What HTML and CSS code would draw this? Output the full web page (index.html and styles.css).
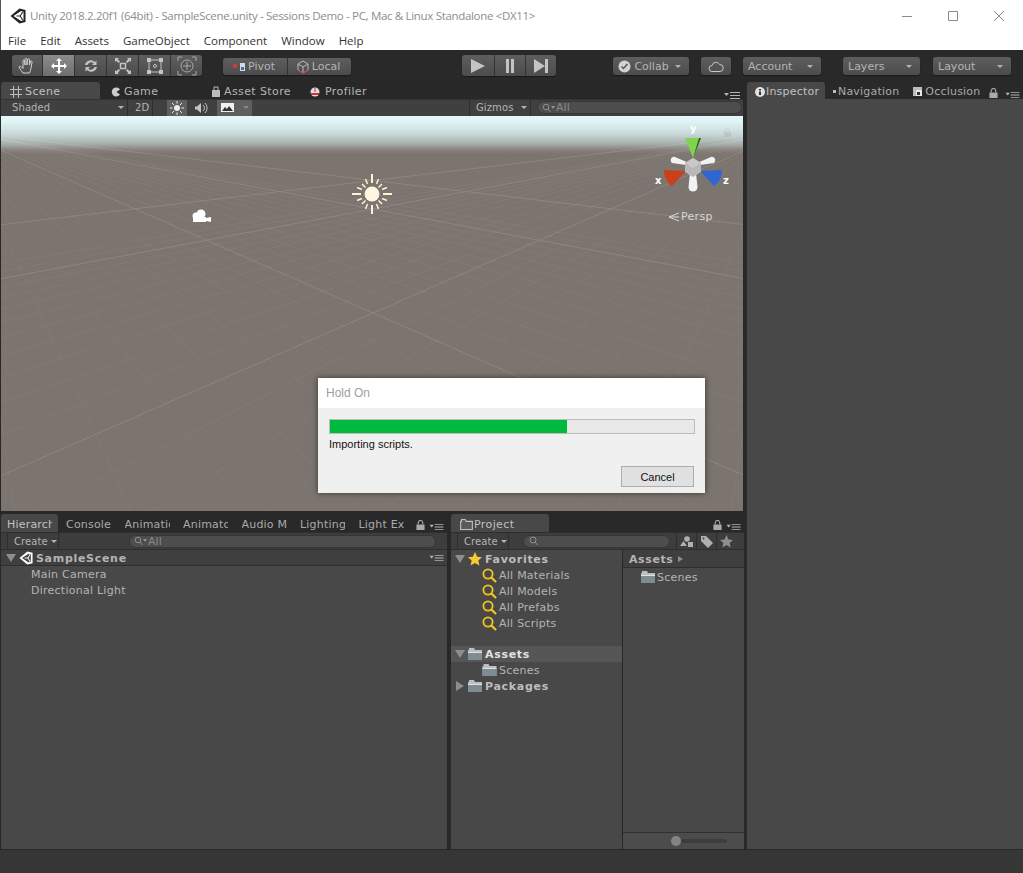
FILE: index.html
```html
<!DOCTYPE html>
<html lang="en">
<head>
  <meta charset="UTF-8">
  <title>Unity 2018.2.20f1</title>
  <link rel="stylesheet" href="styles.css">
</head>
<body>
  <svg class="defs" width="0" height="0">
    <symbol id="logo" viewBox="0 0 16 16"><path d="M.5 8L9.500.5l6 1.500v12l-6 1.500zM3.500 8l7.500 5 2.500-.8V3.800L11 3z" fill-rule="evenodd"/><path d="M6.500 7.400h3.400l2.400-3.900.9.600L10.800 8l2.400 3.900-.9.600-2.400-3.900H6.500z"/></symbol>
    <symbol id="folder" viewBox="0 0 14 12"><path d="M0 2h1V0h5l1 2h7v10H0z" fill="#b9c0c2"/><path d="M0 4h14v8H0z" fill="#7f8d92"/><path d="M0 4h14v1H0z" fill="#dfe3e4"/></symbol>
    <symbol id="mag" viewBox="0 0 15 15"><circle cx="6" cy="6" r="4.600" fill="none" stroke="#f2c81f" stroke-width="1.800"/><path d="M9.500 9.500l4.500 4.500" stroke="#f2c81f" stroke-width="2.200"/></symbol>
    <symbol id="lock" viewBox="0 0 9 11"><path d="M0 5h9v6H0z" fill="#aaa"/><path d="M2 5V3a2.500 2.500 0 015 0v2" fill="none" stroke="#aaa" stroke-width="1.200"/></symbol>
    <symbol id="menu" viewBox="0 0 16 8"><path d="M0 2h5L2.500 5zM6 1h10v1H6zM6 4h10v1H6zM6 7h10v1H6z" fill="#b5b5b5"/></symbol>
    <symbol id="srch" viewBox="0 0 14 10"><circle cx="4" cy="4" r="2.800" fill="none" stroke="#909090"/><path d="M6 6l2.500 3" stroke="#909090"/><path d="M9 3h4l-2 3z" fill="#909090"/></symbol>
  </svg>

  <div class="window">
    <header class="titlebar">
      <svg class="title-logo"><use href="#logo"/></svg>
      <span class="title-text">Unity 2018.2.20f1 (64bit) - SampleScene.unity - Sessions Demo - PC, Mac &amp; Linux Standalone &lt;DX11&gt;</span>
      <div class="win-btns">
        <svg width="12" height="12" viewBox="0 0 12 12"><path d="M1 6.500h10" stroke="#8a8a8a"/></svg>
        <svg width="12" height="12" viewBox="0 0 12 12"><path d="M1.500 1.500h9v9h-9z" fill="none" stroke="#8a8a8a"/></svg>
        <svg width="12" height="12" viewBox="0 0 12 12"><path d="M1 1l10 10M11 1L1 11" stroke="#8a8a8a"/></svg>
      </div>
    </header>

    <nav class="menubar">
      <span>File</span><span>Edit</span><span>Assets</span><span>GameObject</span><span>Component</span><span>Window</span><span>Help</span>
    </nav>

    <div class="toolbar">
      <div class="btn-group tools">
        <button class="tool"><svg width="18" height="18" viewBox="0 0 18 18"><path d="M5 16c-2-3-4-5-4-6s1.500-1 2.500 0L5 11.500V4c0-1.500 1.500-1.500 1.500 0l.500 4V2.500c0-1.500 2-1.500 2 0V8l.500-5c0-1.500 2-1.500 2 0L11.500 8l1-3.500c.500-1 1.800-.700 1.600.500L13 11c0 2-1 3-1.500 5z" fill="none" stroke="#d0d0d0"/></svg></button>
        <button class="tool active"><svg width="18" height="18" viewBox="0 0 18 18"><path d="M9 1l3 3h-2v4h4V6l3 3-3 3v-2h-4v4h2l-3 3-3-3h2v-4H4v2L1 9l3-3v2h4V4H6z" fill="#fff"/></svg></button>
        <button class="tool"><svg width="18" height="18" viewBox="0 0 18 18"><path d="M3 8a6 6 0 0110-3l1.500-1.500V8H10l1.700-1.700A4 4 0 005.400 8zM15 10a6 6 0 01-10 3l-1.500 1.500V10H8l-1.700 1.700a4 4 0 006.300-1.700z" fill="#c4c4c4"/></svg></button>
        <button class="tool"><svg width="18" height="18" viewBox="0 0 18 18"><path d="M6.500 6.500h5v5h-5z" fill="none" stroke="#c4c4c4" stroke-width="1.500"/><path d="M1 5V1h4L3.700 2.300 6 4.600 4.600 6 2.300 3.700zM17 5V1h-4l1.300 1.300L12 4.600 13.400 6l2.300-2.300zM1 13v4h4l-1.300-1.300L6 13.400 4.600 12l-2.300 2.300zM17 13v4h-4l1.300-1.300-2.300-2.300 1.400-1.400 2.300 2.300z" fill="#c4c4c4"/></svg></button>
        <button class="tool"><svg width="18" height="18" viewBox="0 0 18 18"><path d="M3 3h12v12H3z" fill="none" stroke="#c4c4c4"/><path d="M1 1h4v4H1zM13 1h4v4h-4zM1 13h4v4H1zM13 13h4v4h-4z" fill="#c4c4c4"/><circle cx="9" cy="9" r="1.500" fill="none" stroke="#c4c4c4"/></svg></button>
        <button class="tool"><svg width="20" height="20" viewBox="0 0 20 20"><circle cx="10" cy="10" r="6" fill="none" stroke="#a8a8a8"/><path d="M10 6v8M6 10h8" stroke="#a8a8a8"/><path d="M1 5V1h4M15 1h4v4M1 15v4h4M19 15v4h-4" fill="none" stroke="#a8a8a8"/></svg></button>
      </div>

      <div class="btn-group pivot">
        <button class="pivot-btn"><svg width="14" height="10" viewBox="0 0 14 10"><path d="M1 2h4v4H1z" fill="#d03a30"/><path d="M8 1h5v8H8z" fill="#d8d8d8"/><path d="M9 5h3v3H9z" fill="#3a6fc8"/></svg>Pivot</button>
        <button class="pivot-btn"><svg width="14" height="14" viewBox="0 0 14 14"><path d="M7 1l5 3v6l-5 3-5-3V4zM2 4l5 3 5-3M7 7v6" fill="none" stroke="#b8b8b8"/><path d="M2 10l5 3 5-3" fill="none" stroke="#d03a30"/></svg>Local</button>
      </div>

      <div class="btn-group play">
        <button class="play-btn"><svg width="16" height="14" viewBox="0 0 16 14"><path d="M1 0l14 7-14 7z" fill="#c4c4c4"/></svg></button>
        <button class="play-btn"><svg width="12" height="14" viewBox="0 0 12 14"><path d="M2 0h3v14H2zM7 0h3v14H7z" fill="#c4c4c4"/></svg></button>
        <button class="play-btn"><svg width="16" height="14" viewBox="0 0 16 14"><path d="M1 0l11 7-11 7zM12 0h3v14h-3z" fill="#c4c4c4"/></svg></button>
      </div>

      <button class="tb-btn collab"><svg width="13" height="13" viewBox="0 0 13 13"><circle cx="6.500" cy="6.500" r="6" fill="#d2d2d2"/><path d="M3.500 6.500l2 2 4-4.500" fill="none" stroke="#555" stroke-width="1.500"/></svg>Collab<i class="caret"></i></button>
      <button class="tb-btn cloud"><svg width="16" height="11" viewBox="0 0 16 11"><path d="M4 10.500a3 3 0 010-6 4 4 0 017.500-1A3.500 3.500 0 0112 10.500z" fill="none" stroke="#c8c8c8"/></svg></button>
      <button class="tb-btn account">Account<i class="caret"></i></button>
      <button class="tb-btn layers">Layers<i class="caret"></i></button>
      <button class="tb-btn layout">Layout<i class="caret"></i></button>
    </div>

    <main class="workspace">
      <div class="left-col">
        <section class="scene-panel">
          <div class="tabs">
            <span class="tab tab-active scene-tab"><svg width="12" height="12" viewBox="0 0 12 12"><path d="M3.500 0v12M8.500 0v12M0 3.500h12M0 8.500h12" stroke="#bbb"/></svg>Scene</span>
            <span class="tab game-tab"><svg width="10" height="10" viewBox="0 0 10 10"><path d="M9 2.500A4.500 4.500 0 109 7.500L5.500 5z" fill="#ccc"/></svg>Game</span>
            <span class="tab store-tab"><svg width="10" height="11" viewBox="0 0 10 11"><path d="M1 4h8v7H1z" fill="#bbb"/><path d="M3 4V1h4v3" fill="none" stroke="#bbb"/></svg>Asset Store</span>
            <span class="tab prof-tab"><svg width="10" height="11" viewBox="0 0 10 11"><circle cx="5" cy="6" r="4.500" fill="#ddd"/><path d="M5 6V2" stroke="#c33"/><path d="M1 7h8v2H1z" fill="#c33"/></svg>Profiler</span>
            <svg class="tab-menu"><use href="#menu"/></svg>
          </div>
          <div class="scene-tools">
            <span class="st-btn shaded">Shaded<i class="caret"></i></span>
            <span class="st-btn twod">2D</span>
            <span class="st-btn st-on light"><svg width="14" height="14" viewBox="0 0 14 14"><circle cx="7" cy="7" r="3" fill="#eee"/><path d="M7 0v2.500M7 11.500V14M0 7h2.500M11.500 7H14M2 2l2 2M10 10l2 2M12 2l-2 2M4 10l-2 2" stroke="#eee"/></svg></span>
            <span class="st-btn sound"><svg width="16" height="12" viewBox="0 0 16 12"><path d="M1 4.500h2L7 1v10L3 7.500H1z" fill="#c4c4c4"/><path d="M9 3a4 4 0 010 6M11 1a7 7 0 010 10" fill="none" stroke="#c4c4c4"/></svg></span>
            <span class="st-btn st-on fx"><svg width="13" height="9" viewBox="0 0 13 9"><path d="M0 0h13v9H0z" fill="#f0f0f0"/><path d="M1 8l3-4 2 2 2-3 4 5z" fill="#333"/></svg><i class="caret caret-dim"></i></span>
            <span class="st-btn gizmos">Gizmos<i class="caret"></i></span>
            <span class="search scene-search"><svg width="14" height="10"><use href="#srch"/></svg>All</span>
          </div>
          <div class="scene-view">
            <svg class="grid" width="742" height="395" viewBox="0 0 742 395">
              <defs>
                <g id="minor-lines">
                  <path d="M788 15L-44 5475M788 15L-44 1835M788 15L-44 1107M788 15L-44 795M788 15L-44 622M788 15L-44 511M788 15L-44 435M788 15L-44 336M788 15L-44 302M788 15L-44 275M788 15L-44 252M788 15L-44 233M788 15L-44 217M788 15L-44 203M788 15L-44 191M788 15L-44 180M788 15L-44 163M788 15L-44 155"/>
                </g>
                <g id="major-lines">
                  <path d="M788 15L-44 379M788 15L-44 171M788 15L-44 114"/>
                </g>
              </defs>
              <g stroke="#fff" fill="none">
                <g opacity=".04">
                  <use href="#minor-lines"/>
                  <use href="#minor-lines" transform="matrix(-1 0 0 1 744 0)"/>
                </g>
                <g opacity=".12">
                  <use href="#major-lines"/>
                  <use href="#major-lines" transform="matrix(-1 0 0 1 744 0)"/>
                </g>
              </g>
            </svg>

            <svg class="sun" width="42" height="42" viewBox="0 0 42 42">
              <circle cx="21" cy="21" r="7.500" fill="#fff6e2"/>
              <g stroke="#fff1d4" stroke-width="1.500">
                <path d="M21 1v9M21 32v9M1 21h9M32 21h9" stroke-width="2"/>
                <path d="M11 11l3.500 3.500M31 31l-3.500-3.500M31 11l-3.500 3.500M11 31l3.500-3.500"/>
                <path d="M14.500 6l2 5M27.500 6l-2 5M14.500 36l2-5M27.500 36l-2-5M6 14.500l5 2M6 27.500l5-2M36 14.500l-5 2M36 27.500l-5-2"/>
              </g>
            </svg>

            <svg class="camera" width="22" height="16" viewBox="0 0 22 16">
              <circle cx="10" cy="5" r="4.500" fill="#fff"/><circle cx="5" cy="7" r="3.500" fill="#fff"/>
              <path d="M2 8h13v5H2zM15 9l5-1v5l-5-1z" fill="#fff"/>
            </svg>

            <div class="gizmo">
              <svg width="70" height="75" viewBox="0 0 70 75">
                <path d="M25 13h16l-8 20z" fill="#7ed34f"/><path d="M39 13h2l-8 20z" fill="#2f5a20"/>
                <path d="M4 45l22 1-14 15c-5-3-8-9-8-16z" fill="#c8401c"/>
                <path d="M62 45l-22 1 14 15c5-3 8-9 8-16z" fill="#2f66d0"/>
                <path d="M26 40l-14-2c-3-3 0-7 3-6l14 6zM40 40l14-2c3-3 0-7-3-6l-14 6zM30 48l-1.500 14c0 6 9 6 9 0L36 48z" fill="#f2f2f2"/>
                <path d="M33 33l8 5v9l-8 5-8-5v-9z" fill="#b8b8b8"/><path d="M33 33l8 5-8 5-8-5z" fill="#c8c8c8"/>
              </svg>
              <span class="axis axis-y">y</span>
              <span class="axis axis-x">x</span>
              <span class="axis axis-z">z</span>
              <svg class="gizmo-lock"><use href="#lock"/></svg>
              <span class="persp"><svg width="12" height="10" viewBox="0 0 12 10"><path d="M11 1L1 5l10 4M1 5h10" fill="none" stroke="#d8d8d8"/></svg>Persp</span>
            </div>
          </div>
        </section>

        <div class="bottom-row">
          <section class="hierarchy">
            <div class="tabs">
              <span class="tab tab-active h-tab"><span class="clip">Hierarchy</span></span>
              <span class="h-tabname"><span class="clip">Console</span></span>
              <span class="h-tabname"><span class="clip">Animation</span></span>
              <span class="h-tabname"><span class="clip">Animator</span></span>
              <span class="h-tabname"><span class="clip">Audio Mixer</span></span>
              <span class="h-tabname"><span class="clip">Lighting</span></span>
              <span class="h-tabname"><span class="clip">Light Explorer</span></span>
              <svg class="tab-lock"><use href="#lock"/></svg>
              <svg class="tab-menu small"><use href="#menu"/></svg>
            </div>
            <div class="panel-tools">
              <span class="create">Create<i class="caret"></i></span>
              <span class="search h-search"><svg width="14" height="10"><use href="#srch"/></svg>All</span>
            </div>
            <div class="scene-header">
              <i class="arrow-down"></i>
              <svg class="scene-logo" width="14" height="14"><use href="#logo"/></svg>
              <b>SampleScene</b>
              <svg class="tab-menu small"><use href="#menu"/></svg>
            </div>
            <div class="row h-row">Main Camera</div>
            <div class="row h-row">Directional Light</div>
          </section>

          <section class="project">
            <div class="tabs">
              <span class="tab tab-active p-tab"><svg width="13" height="11" viewBox="0 0 14 12"><path d="M.600 2.600h1V.600h4l1 2h6.800v8.800H.600z" fill="#5a5a5a" stroke="#c0c0c0" stroke-width="1.200"/></svg>Project</span>
              <svg class="tab-lock"><use href="#lock"/></svg>
              <svg class="tab-menu small"><use href="#menu"/></svg>
            </div>
            <div class="panel-tools">
              <span class="create">Create<i class="caret"></i></span>
              <span class="search p-search"><svg width="14" height="10" viewBox="0 0 14 10"><circle cx="5" cy="4" r="3" fill="none" stroke="#909090"/><path d="M7 6l2.500 3" stroke="#909090"/></svg></span>
              <span class="p-icon"><svg width="13" height="11" viewBox="0 0 13 11"><circle cx="7" cy="3" r="2.800" fill="#b0b0b0"/><path d="M0 10l3.500-5L7 10z" fill="#b0b0b0"/><path d="M8 6h5v5H8z" fill="#b0b0b0"/></svg></span>
              <span class="p-icon"><svg width="13" height="13" viewBox="0 0 13 13"><path d="M1 1h5l7 7-5 5-7-7z" fill="#b0b0b0"/><circle cx="3.500" cy="3.500" r="1" fill="#444"/></svg></span>
              <span class="p-icon"><svg width="13" height="13" viewBox="0 0 13 13"><path d="M6.500 0l2 4.400 4.500.500-3.400 3 1 4.600-4.100-2.400-4.100 2.400 1-4.600L0 4.900l4.500-.500z" fill="#8f8f8f"/></svg></span>
            </div>
            <div class="project-body">
              <div class="p-tree">
                <div class="row tree-head">
                  <i class="arrow-down"></i>
                  <svg class="ic" width="14" height="14" viewBox="0 0 13 13"><path d="M6.500 0l2 4.400 4.500.500-3.400 3 1 4.600-4.100-2.400-4.100 2.400 1-4.600L0 4.900l4.500-.500z" fill="#f7c934"/></svg>
                  <b>Favorites</b>
                </div>
                <div class="row tree-item"><svg class="ic" width="15" height="15"><use href="#mag"/></svg>All Materials</div>
                <div class="row tree-item"><svg class="ic" width="15" height="15"><use href="#mag"/></svg>All Models</div>
                <div class="row tree-item"><svg class="ic" width="15" height="15"><use href="#mag"/></svg>All Prefabs</div>
                <div class="row tree-item"><svg class="ic" width="15" height="15"><use href="#mag"/></svg>All Scripts</div>
                <div class="row tree-head selected assets-row">
                  <i class="arrow-down"></i>
                  <svg class="ic" width="14" height="12"><use href="#folder"/></svg>
                  <b>Assets</b>
                </div>
                <div class="row tree-item"><svg class="ic" width="15" height="12"><use href="#folder"/></svg>Scenes</div>
                <div class="row tree-head">
                  <i class="arrow-right"></i>
                  <svg class="ic" width="14" height="12"><use href="#folder"/></svg>
                  <b>Packages</b>
                </div>
              </div>
              <div class="p-files">
                <div class="crumb"><b>Assets</b><i class="crumb-arrow"></i></div>
                <div class="row file-row"><svg class="ic" width="14" height="12"><use href="#folder"/></svg>Scenes</div>
                <div class="spacer"></div>
                <div class="slider-bar"><i class="knob"></i><i class="track"></i></div>
              </div>
            </div>
          </section>
        </div>
      </div>

      <aside class="inspector">
        <div class="tabs">
          <span class="tab tab-active i-tab"><svg width="10" height="10" viewBox="0 0 10 10"><circle cx="5" cy="5" r="5" fill="#e0e0e0"/><path d="M4 2h2v1.500H4zM4 4.500h2V8H4z" fill="#333"/></svg>Inspector</span>
          <span class="nav-tab"><i class="nav-dot"></i>Navigation</span>
          <span class="occ-tab"><svg width="9" height="9" viewBox="0 0 9 9"><path d="M0 0h9v9H0z" fill="#bdbdbd"/><path d="M3 3h6v6H3z" fill="#e8e8e8"/><path d="M4 5h3v3H4z" fill="#333"/></svg>Occlusion</span>
          <svg class="tab-lock"><use href="#lock"/></svg>
          <svg class="tab-menu small"><use href="#menu"/></svg>
        </div>
        <div class="inspector-body"></div>
      </aside>
    </main>

    <footer class="statusbar"></footer>
  </div>

  <div class="dialog">
    <div class="dialog-title">Hold On</div>
    <div class="dialog-body">
      <div class="progress"><div class="progress-fill" style="width:65%"></div></div>
      <div class="dialog-msg">Importing scripts.</div>
      <div class="dialog-actions"><button class="cancel">Cancel</button></div>
    </div>
  </div>
</body>
</html>
```

FILE: styles.css
```css
/* Unity editor, dark theme */
* {
  box-sizing: border-box;
}

html, body {
  margin: 0;
  height: 873px;
  overflow: hidden;
}

body {
  position: relative;
  background-color: #282828;
  font-family: "DejaVu Sans", sans-serif;
  font-size: 11px;
  color: #b4b4b4;
}

button {
  font: inherit;
  color: inherit;
  padding: 0;
  border: none;
  background: none;
}

.defs {
  position: absolute;
}

.window {
  display: flex;
  flex-direction: column;
  height: 873px;
}

/* title and menu */
.titlebar {
  height: 31px;
  flex: none;
  display: flex;
  align-items: center;
  background-color: #fff;
  padding-left: 9px;
  border-left: 1px solid #555;
  font-family: "Open Sans", sans-serif;
  font-size: 11.5px;
  color: #8d8d8d;
}

.title-logo {
  width: 16px;
  height: 16px;
  margin-right: 4px;
  fill: #222;
}

.title-text {
  flex: 1;
  letter-spacing: -0.32px;
}

.win-btns {
  display: flex;
  gap: 34px;
  padding-right: 18px;
}

.menubar {
  height: 19px;
  flex: none;
  display: flex;
  gap: 14px;
  align-items: center;
  background-color: #fff;
  padding-left: 7px;
  border-left: 1px solid #555;
  font-family: "Open Sans", sans-serif;
  font-size: 11.5px;
  color: #333;
}

/* main toolbar */
.toolbar {
  height: 32px;
  flex: none;
  display: flex;
  align-items: flex-start;
  background-color: #292929;
  padding-left: 12px;
  letter-spacing: 0.5px;
}

.btn-group {
  display: flex;
  background: linear-gradient(#5e5e5e, #4c4c4c);
  border-radius: 3px;
  box-shadow: 0 1px 1px #1a1a1a;
}

.tools {
  margin-top: 5px;
  height: 21px;
}

.tool {
  width: 32px;
  display: flex;
  align-items: center;
  justify-content: center;
  border-left: 1px solid #333;
}

.tool:first-child {
  border-left: none;
  width: 30px;
}

.tool.active {
  background: linear-gradient(#8c8c8c, #6e6e6e);
}

.pivot {
  margin: 8px 0 0 21px;
  height: 17px;
}

.pivot-btn {
  width: 64px;
  display: flex;
  align-items: center;
  justify-content: center;
  gap: 2px;
  padding-right: 3px;
  border-left: 1px solid #333;
}

.pivot-btn:first-child {
  border-left: none;
}

.play {
  margin: 5px 0 0 111px;
  height: 21px;
}

.play-btn {
  width: 31px;
  display: flex;
  align-items: center;
  justify-content: center;
  border-left: 1px solid #333;
}

.play-btn:first-child {
  border-left: none;
  width: 32px;
}

.tb-btn {
  height: 18px;
  margin-top: 7px;
  display: flex;
  align-items: center;
  background: linear-gradient(#5e5e5e, #4c4c4c);
  border-radius: 3px;
  box-shadow: 0 1px 1px #1a1a1a;
  padding: 0 5px;
  justify-content: space-between;
}

.collab {
  width: 76px;
  margin-left: 57px;
}

.cloud {
  width: 30px;
  margin-left: 12px;
  justify-content: center;
}

.account {
  width: 78px;
  margin-left: 12px;
}

.layers {
  width: 77px;
  margin-left: 22px;
}

.layout {
  width: 78px;
  margin-left: 13px;
}

.caret {
  display: inline-block;
  width: 0;
  height: 0;
  margin: 0 3px;
  border: 3px solid transparent;
  border-top: 3px solid #b4b4b4;
  border-bottom: none;
}

.caret-dim {
  border-top-color: #888;
}

/* docked panels */
.workspace {
  flex: 1;
  display: flex;
  min-height: 0;
}

.left-col {
  width: 744px;
  flex: none;
  display: flex;
  flex-direction: column;
  padding-left: 1px;
}

.tabs {
  height: 17px;
  flex: none;
  display: flex;
  align-items: center;
  position: relative;
  letter-spacing: 0.4px;
}

.tabs > span {
  padding-top: 2px;
}

.tab {
  height: 17px;
  display: flex;
  align-items: center;
  gap: 3px;
}

.tab-active {
  background-color: #484848;
  border-radius: 3px 3px 0 0;
  color: #c0c0c0;
}

.tab-menu {
  position: absolute;
  right: 3px;
  top: 9px;
  width: 16px;
  height: 8px;
}

.tab-menu.small {
  width: 15px;
  height: 7px;
}

.tab-lock {
  position: absolute;
  right: 22px;
  top: 6px;
  width: 9px;
  height: 10px;
}

.scene-panel {
  height: 429px;
  flex: none;
  display: flex;
  flex-direction: column;
  margin-right: 1px;
}

.scene-tab {
  width: 99px;
  padding-left: 9px;
}

.game-tab {
  margin-left: 11px;
  width: 100px;
}

.store-tab {
  width: 99px;
}

.prof-tab {
  gap: 5px;
}

.scene-tools {
  height: 17px;
  flex: none;
  display: flex;
  align-items: center;
  background-color: #404040;
  border-top: 1px solid #333;
  padding-bottom: 1px;
  font-size: 10px;
  letter-spacing: 0.1px;
}

.st-btn {
  height: 16px;
  display: flex;
  align-items: center;
}

.shaded {
  width: 127px;
  padding-left: 11px;
  justify-content: space-between;
  border-right: 1px solid #2e2e2e;
}

.twod {
  width: 25px;
  padding-left: 7px;
  border-right: 1px solid #2e2e2e;
  margin-right: 14px;
}

.st-on {
  background-color: #5f5f5f;
}

.light {
  width: 20px;
  justify-content: center;
}

.sound {
  width: 30px;
  justify-content: center;
}

.fx {
  width: 35px;
  padding-left: 4px;
  justify-content: space-between;
}

.gizmos {
  width: 62px;
  margin-left: 217px;
  padding-left: 6px;
  border-left: 1px solid #2e2e2e;
  border-right: 1px solid #2e2e2e;
  justify-content: space-between;
}

.search {
  height: 13px;
  display: flex;
  align-items: center;
  background-color: #4d4d4d;
  border: 1px solid #363636;
  border-radius: 7px;
  padding-left: 4px;
  color: #8a8a8a;
}

.scene-search {
  width: 205px;
  margin-left: 6px;
  font-size: 11px;
}

.scene-view {
  flex: 1;
  position: relative;
  overflow: hidden;
  background: linear-gradient(#e4fafa 0, #dcf0f0 8px, #c8d8d8 18px, #a5adab 28px, #87817c 34px, #7c746e 38px, #7c746e 100%);
}

.grid {
  position: absolute;
  left: 0;
  top: 0;
}

.sun {
  position: absolute;
  left: 350px;
  top: 57px;
}

.camera {
  position: absolute;
  left: 190px;
  top: 93px;
}

.gizmo {
  position: absolute;
  left: 659px;
  top: 9px;
  width: 80px;
  height: 110px;
}

.gizmo > svg:first-child {
  position: absolute;
  left: 0;
  top: 0;
}

.axis {
  position: absolute;
  font-weight: bold;
  font-size: 10px;
  color: #fff;
}

.axis-y {
  left: 30px;
  top: -2px;
}

.axis-x {
  left: -5px;
  top: 50px;
}

.axis-z {
  left: 63px;
  top: 50px;
}

.gizmo-lock {
  position: absolute;
  left: 64px;
  top: 3px;
  width: 7px;
  height: 9px;
  opacity: 0.35;
}

.persp {
  position: absolute;
  left: 8px;
  top: 85px;
  display: flex;
  align-items: center;
  gap: 1px;
  color: #d8d8d8;
  letter-spacing: 0.3px;
}

/* bottom panels */
.bottom-row {
  flex: 1;
  display: flex;
  gap: 4px;
  padding-top: 3px;
  min-height: 0;
}

.hierarchy {
  width: 446px;
  flex: none;
  display: flex;
  flex-direction: column;
  background-color: #484848;
  position: relative;
}

.hierarchy .tabs, .project .tabs, .inspector .tabs {
  background-color: #292929;
  height: 18px;
}

.hierarchy .tabs {
  letter-spacing: 0.2px;
}

.h-tab {
  width: 57px;
  height: 18px;
  padding-left: 6px;
  flex: none;
}

.h-tabname {
  width: 58.5px;
  flex: none;
  padding-left: 8px;
  color: #aaa;
}

.clip {
  display: block;
  width: 45px;
  overflow: hidden;
  white-space: nowrap;
}

.panel-tools {
  height: 18px;
  flex: none;
  display: flex;
  align-items: center;
  background-color: #3d3d3d;
  border-top: 1px solid #2e2e2e;
  border-bottom: 1px solid #2e2e2e;
  font-size: 10px;
  letter-spacing: 0.1px;
}

.create {
  width: 52px;
  height: 16px;
  display: flex;
  align-items: center;
  justify-content: space-between;
  margin-left: 6px;
  padding-left: 6px;
  border-left: 1px solid #2e2e2e;
  border-right: 1px solid #2e2e2e;
}

.h-search {
  width: 307px;
  margin-left: 70px;
  font-size: 11px;
}

.scene-header {
  height: 16px;
  flex: none;
  display: flex;
  align-items: center;
  position: relative;
  background-color: #3f3f3f;
  border-bottom: 1px solid #2e2e2e;
  padding: 1px 0 0 5px;
  letter-spacing: 0.7px;
}

.scene-header b {
  margin-left: 3px;
}

.scene-logo {
  margin-left: 3px;
  fill: #fff;
}

.scene-header .tab-menu {
  top: 4px;
}

.arrow-down {
  display: inline-block;
  width: 0;
  height: 0;
  border: 5px solid transparent;
  border-top: 8px solid #8e8e8e;
  border-bottom: none;
}

.arrow-right {
  display: inline-block;
  width: 0;
  height: 0;
  margin-left: 1px;
  margin-right: 1px;
  border: 5px solid transparent;
  border-left: 8px solid #8e8e8e;
  border-right: none;
}

.row {
  height: 16px;
  flex: none;
  display: flex;
  align-items: center;
  letter-spacing: 0.25px;
}

.h-row {
  padding-left: 30px;
}

.project {
  flex: 1;
  display: flex;
  flex-direction: column;
  position: relative;
  background-color: #484848;
  min-width: 0;
}

.p-tab {
  width: 98px;
  height: 18px;
  padding-left: 9px;
  gap: 1px;
}

.p-search {
  width: 147px;
  margin-left: 14px;
}

.p-icon {
  width: 20px;
  height: 16px;
  display: flex;
  align-items: center;
  justify-content: center;
  border-left: 1px solid #2e2e2e;
}

.p-search + .p-icon {
  margin-left: 6px;
}

.project-body {
  flex: 1;
  display: flex;
  min-height: 0;
}

.p-tree {
  width: 172px;
  flex: none;
  border-right: 1px solid #282828;
  padding-top: 1px;
}

.tree-head {
  padding-left: 4px;
  letter-spacing: 0.7px;
  color: #bdbdbd;
}

.tree-head .ic {
  margin-left: 3px;
  margin-right: 3px;
}

.tree-item {
  padding-left: 31px;
}

.ic {
  margin-right: 2px;
}

.assets-row {
  margin-top: 15px;
}

.selected {
  background-color: #565656;
  color: #e2e2e2;
}

.p-files {
  flex: 1;
  display: flex;
  flex-direction: column;
}

.crumb {
  height: 18px;
  flex: none;
  display: flex;
  align-items: center;
  gap: 5px;
  background-color: #3f3f3f;
  border-bottom: 1px solid #2e2e2e;
  padding: 1px 0 0 6px;
  letter-spacing: 0.6px;
}

.crumb-arrow {
  width: 0;
  height: 0;
  border: 3px solid transparent;
  border-left: 5px solid #8e8e8e;
  border-right: none;
}

.file-row {
  margin-top: 1px;
  padding-left: 18px;
}

.spacer {
  flex: 1;
}

.slider-bar {
  height: 17px;
  flex: none;
  display: flex;
  align-items: center;
  background-color: #4c4c4c;
  border-top: 1px solid #303030;
  padding-left: 48px;
}

.knob {
  width: 10px;
  height: 10px;
  border-radius: 50%;
  background-color: #838383;
}

.track {
  width: 46px;
  height: 4px;
  background-color: #3d3d3d;
  border-radius: 2px;
}

/* inspector */
.inspector {
  flex: 1;
  margin-left: 3px;
  display: flex;
  flex-direction: column;
  position: relative;
  background-color: #292929;
}

.inspector .tabs {
  height: 17px;
  letter-spacing: 0.2px;
}

.i-tab {
  width: 78px;
  height: 17px;
  padding-left: 8px;
  gap: 1px;
}

.nav-tab {
  margin-left: 8px;
  display: flex;
  align-items: center;
  color: #aaa;
}

.nav-dot {
  width: 3px;
  height: 3px;
  margin-right: 2px;
  background-color: #bbb;
}

.occ-tab {
  margin-left: 14px;
  display: flex;
  align-items: center;
  gap: 3px;
  color: #aaa;
}

.inspector .tab-lock {
  right: 25px;
}

.inspector-body {
  flex: 1;
  background-color: #484848;
}

.statusbar {
  height: 23px;
  flex: none;
  margin-top: 1px;
  background-color: #363636;
}

/* progress dialog */
.dialog {
  position: absolute;
  left: 318px;
  top: 378px;
  width: 387px;
  height: 115px;
  background-color: #f0f0f0;
  box-shadow: 0 0 6px rgba(0, 0, 0, 0.55);
  font-family: "Liberation Sans", sans-serif;
  font-size: 11px;
  color: #111;
}

.dialog-title {
  height: 30px;
  background-color: #fff;
  padding: 8px 0 0 8px;
  font-size: 12px;
  color: #a0a0a0;
}

.dialog-body {
  padding: 11px 10px 0 11px;
}

.progress {
  height: 15px;
  background-color: #e8e8e8;
  border: 1px solid #bcbcbc;
}

.progress-fill {
  height: 100%;
  background-color: #00ba3e;
}

.dialog-msg {
  margin-top: 4px;
}

.dialog-actions {
  display: flex;
  justify-content: flex-end;
  margin-top: 16px;
}

.cancel {
  width: 73px;
  height: 21px;
  margin-right: 1px;
  background-color: #e1e1e1;
  border: 1px solid #adadad;
}
```
